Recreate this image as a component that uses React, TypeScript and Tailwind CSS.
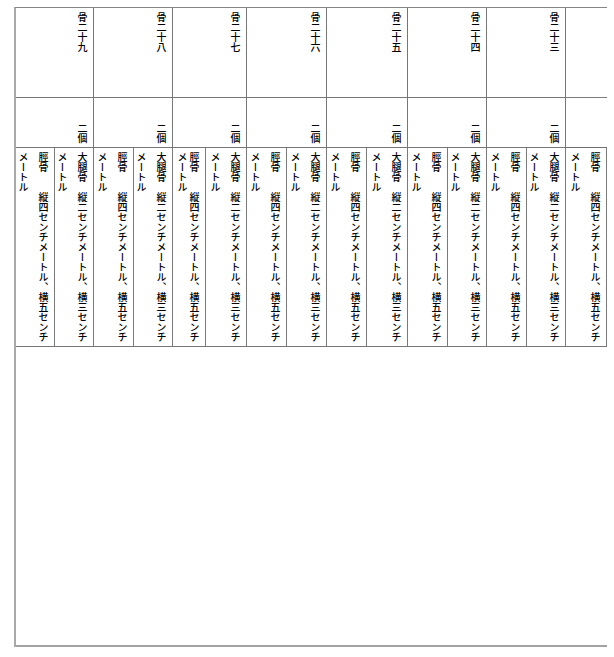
const FEMUR = ['大腿骨　縦二センチメートル、横三センチ', 'メートル'];
const SHIN = ['脛骨　　縦四センチメートル、横五センチ', 'メートル'];

type Sub = { w: string; lines: string[]; narrow?: boolean };
type Group = { w: string; title: string; count: string; last?: boolean; subs: Sub[] };

const GROUPS: Group[] = [
  { w: 'w-[78px]', title: '骨二十九', count: '二個', subs: [{ w: 'w-[39px]', lines: SHIN }, { w: 'w-[39px]', lines: FEMUR }] },
  { w: 'w-[79px]', title: '骨二十八', count: '二個', subs: [{ w: 'w-[40px]', lines: SHIN }, { w: 'w-[39px]', lines: FEMUR }] },
  { w: 'w-[74px]', title: '骨二十七', count: '二個', subs: [{ w: 'w-[33px]', lines: SHIN, narrow: true }, { w: 'w-[41px]', lines: FEMUR }] },
  { w: 'w-[80px]', title: '骨二十六', count: '二個', subs: [{ w: 'w-[40px]', lines: SHIN }, { w: 'w-[40px]', lines: FEMUR }] },
  { w: 'w-[81px]', title: '骨二十五', count: '二個', subs: [{ w: 'w-[40px]', lines: SHIN }, { w: 'w-[41px]', lines: FEMUR }] },
  { w: 'w-[79px]', title: '骨二十四', count: '二個', subs: [{ w: 'w-[40px]', lines: SHIN }, { w: 'w-[39px]', lines: FEMUR }] },
  { w: 'w-[79px]', title: '骨二十三', count: '二個', subs: [{ w: 'w-[40px]', lines: SHIN }, { w: 'w-[39px]', lines: FEMUR }] },
  { w: 'w-[41px]', title: '', count: '', last: true, subs: [{ w: 'w-[41px]', lines: SHIN }] },
];

function Vertical({ lines, narrow }: { lines: string[]; narrow?: boolean }) {
  return (
    <div
      className={`[writing-mode:vertical-rl] [text-orientation:upright] whitespace-nowrap text-[10px] font-medium ${
        narrow ? 'leading-[12px] pr-[5px]' : 'leading-[20px] pr-px'
      }`}
    >
      {lines.map((line, i) => (
        <span key={i}>
          {line}
          {i < lines.length - 1 && <br />}
        </span>
      ))}
    </div>
  );
}

function Column({ group }: { group: Group }) {
  const edge = group.last ? '' : 'border-r border-[#767676]';
  return (
    <div className={`${group.w} flex flex-col shrink-0`}>
      <div className={`h-[90px] flex justify-end pt-[4px] border-b border-[#7c7c7c] ${edge}`}>
        {group.title && <Vertical lines={[group.title]} />}
      </div>
      <div className={`h-[50px] flex justify-end items-end pb-[4px] border-b border-[#6f6f6f] ${edge}`}>
        {group.count && <Vertical lines={[group.count]} />}
      </div>
      <div className="h-[199px] flex border-b border-[#777777]">
        {group.subs.map((sub, i) => (
          <div key={i} className={`${sub.w} shrink-0 flex justify-end pt-[4px] border-r border-[#7a7a7a]`}>
            <Vertical lines={sub.lines} narrow={sub.narrow} />
          </div>
        ))}
      </div>
    </div>
  );
}

export default function App() {
  return (
    <div
      className="min-h-[657px] bg-white text-black pt-[7px] pl-[14px] antialiased"
      style={{ fontFamily: '"Noto Sans CJK JP", sans-serif' }}
    >
      <div className="w-[593px] border-l-2 border-t border-l-[#a9a9a9] border-t-[#858585]">
        <div className="flex">
          {GROUPS.map((g) => (
            <Column key={g.title || 'edge'} group={g} />
          ))}
        </div>
        <div className="h-[300px] border-b-2 border-[#a2a2a2]" />
      </div>
    </div>
  );
}
